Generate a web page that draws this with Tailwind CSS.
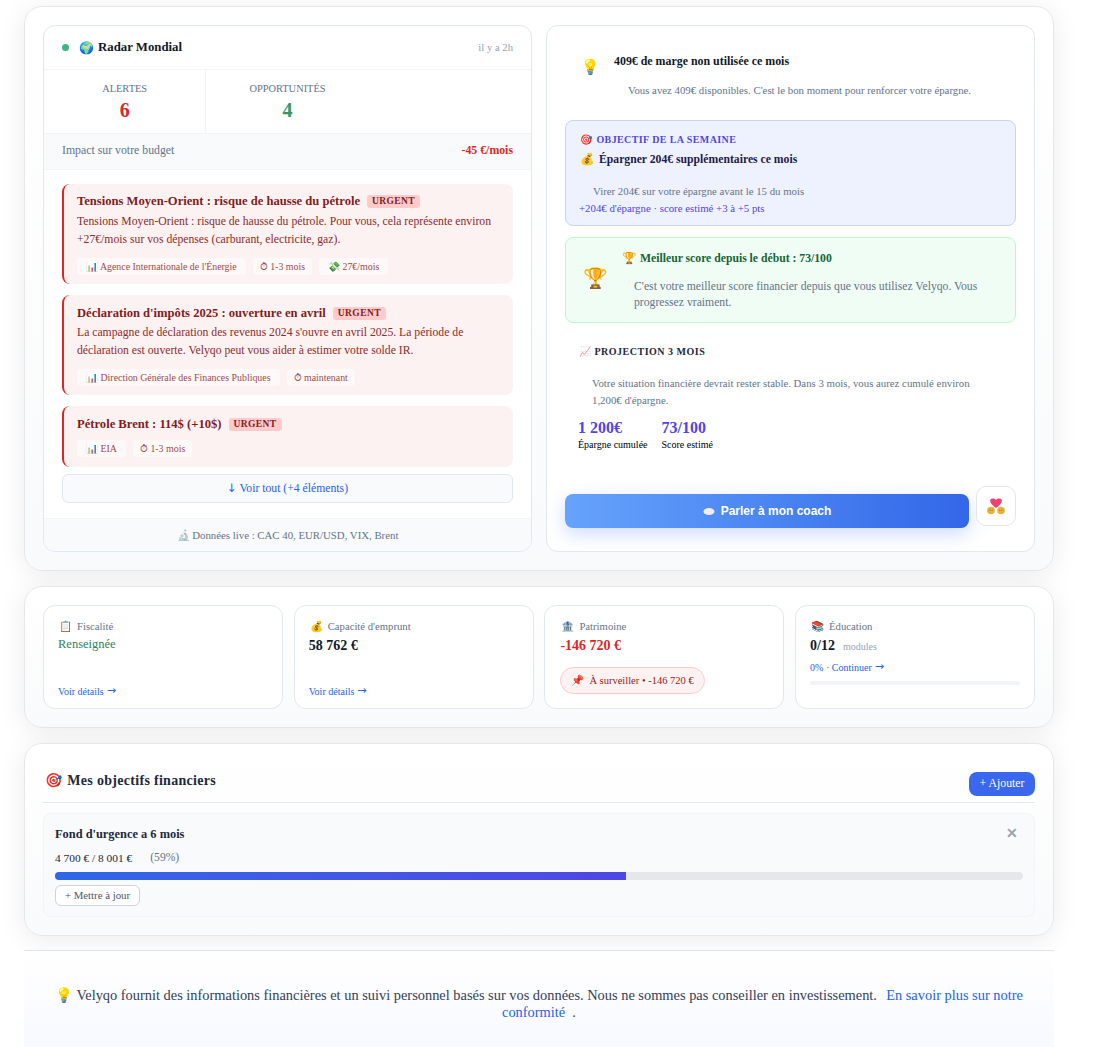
<!DOCTYPE html>
<html lang="fr">
<head>
    <meta charset="UTF-8">
    <meta name="viewport" content="width=device-width, initial-scale=1.0">
    <title>Velyqo</title>
    <script src="https://cdn.jsdelivr.net/npm/@tailwindcss/browser@4"></script>
</head>
<body class="bg-white font-['Liberation_Serif',serif] text-[#1e293b] overflow-hidden h-[1047px]">
    <div class="w-[1030px] ml-6 pt-[6px] flex flex-col">

        <section class="h-[565px] p-[18px] rounded-[18px] border border-[#e5e7eb] bg-gradient-to-b from-white to-[#f9fafb] shadow-[0_4px_28px_rgba(0,0,0,0.08)] grid grid-cols-2 gap-[14px]">
            <!-- radar -->
            <div class="h-[527px] rounded-xl border border-[#e2e8f0] bg-white flex flex-col overflow-hidden">
                <div class="h-[44px] shrink-0 px-[18px] flex items-center justify-between border-b border-[#f1f5f9]">
                    <div class="flex items-center">
                        <span class="w-[7px] h-[7px] rounded-full bg-[#3cb57f] mr-[10px]"></span>
                        <span class="text-[12px] mr-[4px]">🌍</span>
                        <span class="text-[12.8px] font-bold text-[#111827]">Radar Mondial</span>
                    </div>
                    <span class="text-[10.7px] text-[#94a3b8]">il y a 2h</span>
                </div>
                <div class="h-[64px] shrink-0 grid grid-cols-3 border-b border-[#f1f5f9]">
                    <div class="border-r border-[#f1f5f9] text-center pt-[13px]">
                        <div class="text-[10.4px] leading-[12px] text-[#64748b]">ALERTES</div>
                        <div class="mt-[2px] text-[20px] leading-[26px] font-bold text-[#dc2626]">6</div>
                    </div>
                    <div class="text-center pt-[13px]">
                        <div class="text-[10.4px] leading-[12px] text-[#64748b]">OPPORTUNITÉS</div>
                        <div class="mt-[2px] text-[20px] leading-[26px] font-bold text-[#38956a]">4</div>
                    </div>
                </div>
                <div class="h-[36px] shrink-0 px-[18px] pb-[1px] flex items-center justify-between bg-[#f8fafc] border-b border-[#f1f5f9]">
                    <span class="text-[11.8px] text-[#64748b]">Impact sur votre budget</span>
                    <span class="text-[11.8px] font-bold text-[#dc2626]">-45 €/mois</span>
                </div>
                <div class="flex-1 px-[18px] pt-[14px] flex flex-col">
                    <div class="h-[100px] rounded-lg border-l-2 border-[#dc2626] bg-[#fdf2f2] pl-[13px] pr-3 pt-[9px]">
                        <div class="flex items-center h-[17px]">
                            <span class="text-[12.6px] font-bold text-[#7f1d1d]">Tensions Moyen-Orient : risque de hausse du pétrole</span>
                            <span class="ml-[7px] px-[5px] h-[13px] leading-[13px] rounded-[3px] bg-[#fecaca] text-[9.5px] font-bold tracking-[0.4px] text-[#7f1d1d]">URGENT</span>
                        </div>
                        <p class="mt-[3px] text-[11.7px] leading-[18.4px] text-[#8f2b2b]">Tensions Moyen-Orient : risque de hausse du pétrole. Pour vous, cela représente environ +27€/mois sur vos dépenses (carburant, electricite, gaz).</p>
                        <div class="mt-[8px] flex gap-[7px]">
                            <span class="h-[17px] px-[9px] leading-[17px] rounded-[4px] bg-white/50 text-[9.9px] text-[#a14a4a]">📊 Agence Internationale de l'Énergie</span>
                            <span class="h-[17px] px-[7px] leading-[17px] rounded-[4px] bg-white/50 text-[9.9px] text-[#a14a4a]">⏱︎ 1-3 mois</span>
                            <span class="h-[17px] px-[9px] leading-[17px] rounded-[4px] bg-white/50 text-[9.9px] text-[#a14a4a]">💸 27€/mois</span>
                        </div>
                    </div>
                    <div class="mt-[11px] h-[100px] rounded-lg border-l-2 border-[#dc2626] bg-[#fdf2f2] pl-[13px] pr-3 pt-[10px]">
                        <div class="flex items-center h-[17px]">
                            <span class="text-[12.6px] font-bold text-[#7f1d1d]">Déclaration d'impôts 2025 : ouverture en avril</span>
                            <span class="ml-[7px] px-[5px] h-[13px] leading-[13px] rounded-[3px] bg-[#fecaca] text-[9.5px] font-bold tracking-[0.4px] text-[#7f1d1d]">URGENT</span>
                        </div>
                        <p class="mt-[2px] text-[11.7px] leading-[18.4px] text-[#8f2b2b]">La campagne de déclaration des revenus 2024 s'ouvre en avril 2025. La période de déclaration est ouverte. Velyqo peut vous aider à estimer votre solde IR.</p>
                        <div class="mt-[8px] flex gap-[7px]">
                            <span class="h-[17px] px-[9px] leading-[17px] rounded-[4px] bg-white/50 text-[9.9px] text-[#a14a4a]">📊 Direction Générale des Finances Publiques</span>
                            <span class="h-[17px] px-[7px] leading-[17px] rounded-[4px] bg-white/50 text-[9.9px] text-[#a14a4a]">⏱︎ maintenant</span>
                        </div>
                    </div>
                    <div class="mt-[11px] h-[61px] rounded-lg border-l-2 border-[#dc2626] bg-[#fdf2f2] pl-[13px] pr-3 pt-[10px]">
                        <div class="flex items-center h-[17px]">
                            <span class="text-[12.6px] font-bold text-[#7f1d1d]">Pétrole Brent : 114$ (+10$)</span>
                            <span class="ml-[7px] px-[5px] h-[13px] leading-[13px] rounded-[3px] bg-[#fecaca] text-[9.5px] font-bold tracking-[0.4px] text-[#7f1d1d]">URGENT</span>
                        </div>
                        <div class="mt-[7px] flex gap-[7px]">
                            <span class="h-[17px] px-[9px] leading-[17px] rounded-[4px] bg-white/50 text-[9.9px] text-[#a14a4a]">📊 EIA</span>
                            <span class="h-[17px] px-[7px] leading-[17px] rounded-[4px] bg-white/50 text-[9.9px] text-[#a14a4a]">⏱︎ 1-3 mois</span>
                        </div>
                    </div>
                    <button class="mt-[7px] h-[29px] rounded-md border border-[#e2e8f0] bg-[#f8fafc] text-[11.7px] text-[#2563eb] text-center"><span class="font-['DejaVu_Sans',sans-serif]">↓</span> Voir tout (+4 éléments)</button>
                </div>
                <div class="h-[33px] shrink-0 pt-[1px] border-t border-[#f1f5f9] bg-[#f8fafc] flex items-center justify-center text-[10.8px] text-[#64748b]"><span class="opacity-60">🔬</span>&nbsp;Données live : CAC 40, EUR/USD, VIX, Brent</div>
            </div>

            <!-- coach -->
            <div class="h-[527px] rounded-xl border border-[#e2e8f0] bg-white px-[18px] flex flex-col">
                <div class="h-[94px] shrink-0 relative">
                    <span class="absolute left-[16px] top-[31px] text-[15px] leading-[20px]">💡</span>
                    <div class="absolute left-[49px] top-[27px] text-[11.9px] leading-[16px] font-bold text-[#111827]">409€ de marge non utilisée ce mois</div>
                    <div class="absolute left-[63px] top-[57px] text-[10.8px] leading-[15px] text-[#64748b] whitespace-nowrap">Vous avez 409€ disponibles. C'est le bon moment pour renforcer votre épargne.</div>
                </div>
                <div class="h-[106px] shrink-0 rounded-lg border border-[#c7d2fe] bg-[#eef2ff] pl-[13px] pt-[11px]">
                    <div class="flex items-center h-[14px] text-[10px] font-bold tracking-[0.4px] text-[#4f46e5] ml-[1px]"><span class="mr-[4px]">🎯</span>OBJECTIF DE LA SEMAINE</div>
                    <div class="mt-[5px] h-[18px] flex items-center text-[11.7px] font-bold text-[#1e1b4b] ml-[1px]"><span class="mr-[4px]">💰</span>Épargner 204€ supplémentaires ce mois</div>
                    <div class="mt-[15px] ml-[14px] text-[10.8px] leading-[15px] text-[#64748b]">Virer 204€ sur votre épargne avant le 15 du mois</div>
                    <div class="mt-[2px] text-[10.8px] leading-[15px] text-[#4f46e5]">+204€ d'épargne · score estimé +3 à +5 pts</div>
                </div>
                <div class="mt-[11px] h-[86px] shrink-0 rounded-lg border border-[#bbf7d0] bg-[#f0fdf4] relative">
                    <span class="absolute left-[17px] top-[26px] text-[20px] leading-[28px]">🏆</span>
                    <div class="absolute left-[56px] top-[12px] flex items-center text-[11.7px] leading-[17px] font-bold text-[#166534]"><span class="mr-[3px]">🏆</span>Meilleur score depuis le début : 73/100</div>
                    <p class="absolute left-[68px] right-[16px] top-[41px] text-[11.7px] leading-[16px] text-[#64748b]">C'est votre meilleur score financier depuis que vous utilisez Velyqo. Vous progressez vraiment.</p>
                </div>
                <div class="mt-[21px] ml-[14px] h-[14px] flex items-center text-[10px] font-bold tracking-[0.5px] text-[#1e293b]"><span class="mr-[3px] opacity-70">📈</span>PROJECTION 3 MOIS</div>
                <p class="mt-[17px] ml-[27px] mr-[30px] text-[10.8px] leading-[17px] text-[#64748b]">Votre situation financière devrait rester stable. Dans 3 mois, vous aurez cumulé environ 1,200€ d'épargne.</p>
                <div class="mt-[9px] ml-[13px] flex gap-[14px]">
                    <div>
                        <div class="text-[16px] leading-[20px] font-bold text-[#4f46e5]">1 200€</div>
                        <div class="text-[10px] leading-[13px] text-black">Épargne cumulée</div>
                    </div>
                    <div>
                        <div class="text-[16px] leading-[20px] font-bold text-[#4f46e5]">73/100</div>
                        <div class="text-[10px] leading-[13px] text-black">Score estimé</div>
                    </div>
                </div>
                <div class="mt-[35px] flex items-start gap-[7px]">
                    <button class="mt-[8px] w-[404px] h-[34px] rounded-lg bg-gradient-to-r from-[#66a3fb] to-[#3366e8] shadow-[0_6px_18px_rgba(59,110,240,0.25)] font-['Liberation_Sans',sans-serif] text-[12px] font-bold text-white flex items-center justify-center">
                        <svg class="mr-[6px]" width="12" height="9" viewBox="0 0 12 9"><ellipse cx="6" cy="4.5" rx="5.5" ry="3.6" fill="#f1ecf6"/></svg>Parler à mon coach</button>
                    <button class="w-[40px] h-[40px] rounded-[10px] border border-[#e5e7eb] bg-white flex items-center justify-center">
                        <svg width="18" height="18" viewBox="0 0 18 18">
                            <path d="M9 11 C5 8 3.200 5.800 3.200 3.700 C3.200 1.500 6.500 .5 9 3 C11.500 .5 14.800 1.500 14.800 3.700 C14.800 5.800 13 8 9 11Z" fill="#f43f6e"/>
                            <circle cx="4" cy="13.500" r="3.800" fill="#eab136"/>
                            <circle cx="14" cy="13.500" r="3.800" fill="#eab136"/>
                            <circle cx="3" cy="13" r=".6" fill="#8a5a1a"/><circle cx="5.200" cy="13" r=".6" fill="#8a5a1a"/>
                            <circle cx="12.800" cy="13" r=".6" fill="#8a5a1a"/><circle cx="15" cy="13" r=".6" fill="#8a5a1a"/>
                        </svg>
                    </button>
                </div>
            </div>
        </section>

        <section class="mt-[15px] h-[142px] p-[18px] rounded-[18px] border border-[#e5e7eb] bg-gradient-to-b from-white to-[#f9fafb] shadow-[0_4px_28px_rgba(0,0,0,0.08)] grid grid-cols-4 gap-[10.8px]">
            <div class="h-[104px] rounded-xl border border-[#e2e8f0] bg-white px-[14px] pt-[13px] flex flex-col">
                <div class="h-[14px] flex items-center text-[10.7px] text-[#64748b]"><span class="mr-[5px] ml-[1px]">📋</span>Fiscalité</div>
                <div class="mt-[2px] text-[12.5px] leading-[18px] text-[#2f855a]">Renseignée</div>
                <div class="mt-auto mb-[10px] flex items-center h-[14px] text-[10px] text-[#2563eb]">Voir détails<span class="ml-[3px] font-['DejaVu_Sans',sans-serif] text-[11px]">→</span></div>
            </div>
            <div class="h-[104px] rounded-xl border border-[#e2e8f0] bg-white px-[14px] pt-[13px] flex flex-col">
                <div class="h-[14px] flex items-center text-[10.7px] text-[#64748b]"><span class="mr-[5px] ml-[1px]">💰</span>Capacité d'emprunt</div>
                <div class="mt-[3px] text-[14px] leading-[20px] font-bold text-[#111827]">58 762 €</div>
                <div class="mt-auto mb-[10px] flex items-center h-[14px] text-[10px] text-[#2563eb]">Voir détails<span class="ml-[3px] font-['DejaVu_Sans',sans-serif] text-[11px]">→</span></div>
            </div>
            <div class="h-[104px] rounded-xl border border-[#e2e8f0] bg-white px-[15px] pt-[13px] flex flex-col items-start">
                <div class="h-[14px] flex items-center text-[10.7px] text-[#64748b]"><span class="mr-[5px] ml-[1px]">🏦</span>Patrimoine</div>
                <div class="mt-[3px] text-[14px] leading-[20px] font-bold text-[#dc2626]">-146 720 €</div>
                <div class="mt-[11px] h-[27px] px-[10px] rounded-full border border-[#fecaca] bg-[#fdf2f2] flex items-center text-[10.5px] text-[#991b1b]"><span class="mr-[5px]">📌</span>À surveiller • -146 720 €</div>
            </div>
            <div class="h-[104px] rounded-xl border border-[#e2e8f0] bg-white px-[14px] pt-[13px] flex flex-col">
                <div class="h-[14px] flex items-center text-[10.7px] text-[#64748b]"><span class="mr-[5px] ml-[1px]">📚</span>Éducation</div>
                <div class="mt-[3px] flex items-baseline">
                    <span class="text-[14px] leading-[20px] font-bold text-[#111827]">0/12</span>
                    <span class="ml-[8px] text-[10px] text-[#94a3b8]">modules</span>
                </div>
                <div class="mt-[4px] flex items-center h-[14px] text-[10px] text-[#2563eb]">0% · Continuer<span class="ml-[3px] font-['DejaVu_Sans',sans-serif] text-[11px]">→</span></div>
                <div class="mt-[7px] h-1 rounded-full bg-[#f1f5f9]"></div>
            </div>
        </section>

        <section class="mt-[15px] h-[193px] px-[18px] rounded-[18px] border border-[#e5e7eb] bg-gradient-to-b from-white to-[#f9fafb] shadow-[0_4px_28px_rgba(0,0,0,0.08)] flex flex-col">
            <div class="h-[59px] shrink-0 flex items-end justify-between border-b border-[#e2e8f0] pb-[6px]">
                <div class="mb-[5px] flex items-center text-[14px] font-bold tracking-[0.3px] text-[#1e293b]"><span class="ml-[2px] mr-[5px]">🎯</span>Mes objectifs financiers</div>
                <button class="w-[66px] h-[24px] rounded-lg bg-[#3b66ee] text-[11.8px] text-white">+ Ajouter</button>
            </div>
            <div class="mt-[10px] h-[104px] rounded-lg border border-[#f1f5f9] bg-[#f8fafc] px-[11px] relative">
                <div class="mt-[12px] text-[12.4px] leading-[16px] font-bold text-[#1e293b]">Fond d'urgence a 6 mois</div>
                <div class="mt-[7px] flex items-center text-[11.4px] leading-[16px] text-[#1e293b]">4 700 € / 8 001 €<span class="ml-[18px] mt-[1px] text-[11.6px] text-[#64748b]">(59%)</span></div>
                <div class="mt-[6px] h-2 rounded-[4px] bg-[#e5e7eb] overflow-hidden">
                    <div class="h-full bg-gradient-to-r from-[#2f66e8] to-[#4f46e5]" style="width:59%"></div>
                </div>
                <button class="mt-[5px] w-[85px] h-[21px] rounded-md border border-[#cbd5e1] bg-white text-[10.8px] text-[#475569]">+ Mettre à jour</button>
                <span class="absolute right-[16px] top-[11px] text-[14px] leading-[18px] font-bold text-[#9ca3af]">✕</span>
            </div>
        </section>

        <footer class="mt-[14px] h-[98px] border-t border-[#dbe4f0] bg-gradient-to-b from-white to-[#f8f9ff] px-[30px] pt-[36px] text-center text-[14.4px] leading-[17px] text-[#334155]">
            <span>💡</span> Velyqo fournit des informations financières et un suivi personnel basés sur vos données. Nous ne sommes pas conseiller en investissement. &nbsp;<span class="ml-[2px] text-[#2563eb]">En savoir plus sur notre conformité</span> &nbsp;.
        </footer>
    </div>
</body>
</html>
